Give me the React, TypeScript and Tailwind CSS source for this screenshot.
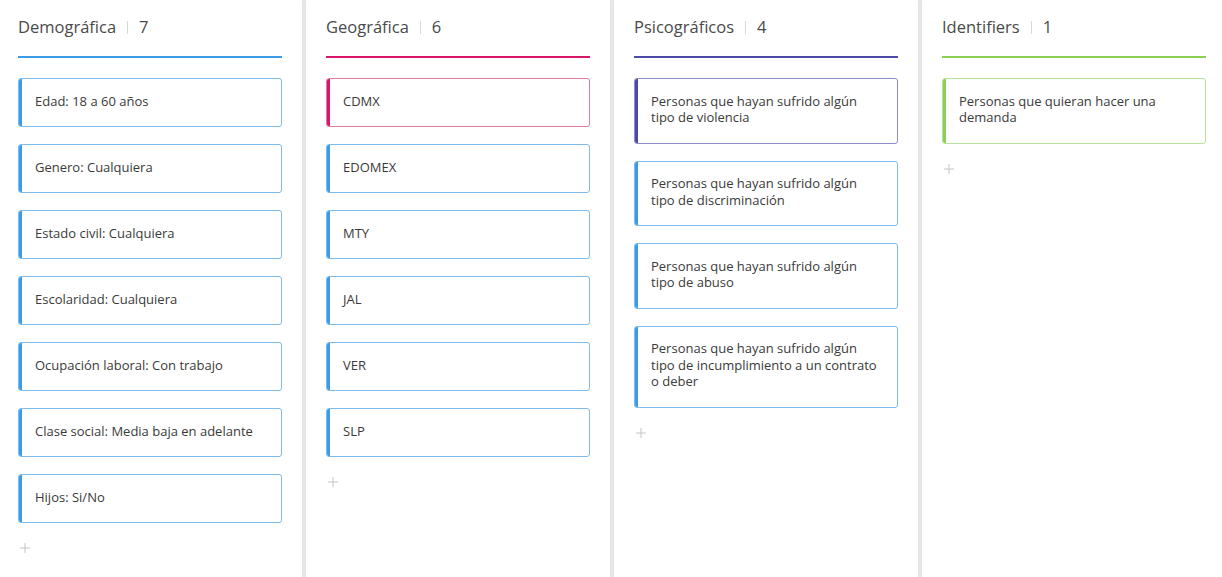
import React from "react";

type Col = {
  title: string;
  bar: string;
  items: string[];
};

const cols: Col[] = [
  {
    title: "Demográfica",
    bar: "bg-[#3b9be6]",
    items: [
      "Edad: 18 a 60 años",
      "Genero: Cualquiera",
      "Estado civil: Cualquiera",
      "Escolaridad: Cualquiera",
      "Ocupación laboral: Con trabajo",
      "Clase social: Media baja en adelante",
      "Hijos: Si/No",
    ],
  },
  {
    title: "Geográfica",
    bar: "bg-[#d8176a]",
    items: ["CDMX", "EDOMEX", "MTY", "JAL", "VER", "SLP"],
  },
  {
    title: "Psicográficos",
    bar: "bg-[#4b4aa6]",
    items: [
      "Personas que hayan sufrido algún tipo de violencia",
      "Personas que hayan sufrido algún tipo de discriminación",
      "Personas que hayan sufrido algún tipo de abuso",
      "Personas que hayan sufrido algún tipo de incumplimiento a un contrato o deber",
    ],
  },
  {
    title: "Identifiers",
    bar: "bg-[#8ccf57]",
    items: ["Personas que quieran hacer una demanda"],
  },
];

const cardStyles: Record<string, { bar: string; border: string }> = {
  blue: { bar: "bg-[#3b9be6]", border: "border-[#7dbcec]" },
  pink: { bar: "bg-[#d8176a]", border: "border-[#e27aa4]" },
  indigo: { bar: "bg-[#4b4aa6]", border: "border-[#8e8dca]" },
  green: { bar: "bg-[#8ccf57]", border: "border-[#b7e299]" },
};

function cardKind(ci: number, ii: number): string {
  if (ci === 1 && ii === 0) return "pink";
  if (ci === 2 && ii === 0) return "indigo";
  if (ci === 3) return "green";
  return "blue";
}

export default function App() {
  return (
    <div
      className="w-[1222px] h-[577px] overflow-hidden bg-[#ebebeb]"
      style={{ fontFamily: '"Open Sans", "Noto Sans", sans-serif' }}
    >
      <div className="flex gap-[4px] ml-[-2px] h-full">
        {cols.map((c, ci) => (
          <div
            key={c.title}
            className="w-[304px] shrink-0 h-full bg-white px-[20px] shadow-[0_0_3px_rgba(0,0,0,0.08)]"
          >
            <div className="pt-[16px] h-[56px] flex items-start">
              <span className="text-[16.5px] leading-[22px] text-[#4a4a4a]">{c.title}</span>
              <span className="mx-[11px] mt-[5px] w-px h-[13px] bg-[#d9d9d9]" />
              <span className="text-[16.5px] leading-[22px] text-[#4a4a4a]">{c.items.length}</span>
            </div>
            <div className={`h-[2px] ${c.bar}`} />
            <div className="pt-[20px] flex flex-col gap-[17px]">
              {c.items.map((it, ii) => {
                const s = cardStyles[cardKind(ci, ii)];
                return (
                  <div
                    key={it}
                    className={`flex rounded-[3px] border ${s.border} overflow-hidden bg-white`}
                  >
                    <div className={`w-[3px] shrink-0 ${s.bar}`} />
                    <div className="pl-[13px] pr-[15px] pt-[13.75px] pb-[16.75px] text-[13px] leading-[16.5px] text-[#3a3a3a]">
                      {it}
                    </div>
                  </div>
                );
              })}
            </div>
            <div className="pt-[19px] pl-[1px] text-[#c4c4c4]">
              <svg width="12" height="12" viewBox="0 0 12 12">
                <path d="M6 1v10M1 6h10" stroke="currentColor" strokeWidth="1" />
              </svg>
            </div>
          </div>
        ))}
      </div>
    </div>
  );
}
